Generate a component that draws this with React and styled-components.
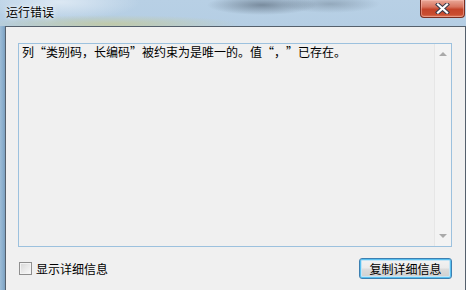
import React from "react";
import styled, { createGlobalStyle } from "styled-components";

const Global = createGlobalStyle`
  html, body { margin: 0; padding: 0; background: #fff; }
  body { width: 466px; height: 290px; overflow: hidden; }
`;

const cjk = `"Noto Sans CJK SC", "Noto Sans", sans-serif`;

const Window = styled.div`
  width: 466px;
  height: 290px;
  display: flex;
  flex-direction: column;
  overflow: hidden;
  background:
    radial-gradient(ellipse 55px 10px at 262px 5px, rgba(70,84,100,0.55), rgba(70,84,100,0) 100%),
    radial-gradient(ellipse 50px 9px at 330px 4px, rgba(80,96,112,0.35), rgba(80,96,112,0) 100%),
    radial-gradient(ellipse 130px 9px at 110px 24px, rgba(196,200,150,0.75), rgba(196,200,150,0) 100%),
    radial-gradient(ellipse 80px 18px at 60px 2px, rgba(226,236,246,0.85), rgba(226,236,246,0) 100%),
    linear-gradient(180deg, #b8d0e5 0%, #a3c3de 60%, #abc6dd 100%);
`;

const TitleBar = styled.div`
  height: 26px;
  flex: none;
  display: flex;
  align-items: flex-start;
  justify-content: space-between;
`;

const Title = styled.span`
  font-family: ${cjk};
  font-size: 12px;
  line-height: 14px;
  color: #000;
  margin: 5px 0 0 6px;
  text-shadow: 0 0 6px rgba(255,255,255,0.9), 0 0 3px rgba(255,255,255,0.9);
`;

const CloseButton = styled.div`
  width: 45px;
  height: 18px;
  margin-right: 1px;
  box-sizing: border-box;
  border: 1px solid #7a2f22;
  border-top: none;
  border-radius: 0 0 4px 4px;
  background: linear-gradient(180deg, #e9a898 0%, #d8745f 40%, #c4442a 55%, #c94d30 85%, #dc7a5c 100%);
  box-shadow: inset 0 0 0 1px rgba(255,200,190,0.45);
  display: flex;
  align-items: center;
  justify-content: center;
`;

const Frame = styled.div`
  flex: 1;
  display: flex;
  min-height: 0;
`;

const SideFrame = styled.div`
  width: 5px;
  flex: none;
  background: linear-gradient(90deg, #9dbcd6 0%, #8aaecd 60%, #7c9fbd 100%);
`;

const Client = styled.div`
  flex: 1;
  display: flex;
  flex-direction: column;
  background: #f0f0f0;
  border: 1px solid #55606c;
  border-bottom: none;
  padding: 16px 13px 0 12px;
`;

const TextBox = styled.div`
  height: 204px;
  box-sizing: border-box;
  border: 1px solid #9cc1de;
  background: #f0f0f0;
  display: flex;
`;

const Message = styled.div`
  flex: 1;
  font-family: ${cjk};
  font-size: 12px;
  line-height: 14px;
  color: #000;
  padding: 1px 0 0 3px;
  white-space: nowrap;
`;

const Quote = styled.span`
  display: inline-block;
  width: 12px;
  text-align: ${(p) => (p.$open ? "right" : "left")};
`;

const ScrollBar = styled.div`
  width: 16px;
  flex: none;
  background: #f3f3f3;
  border-left: 1px solid #e6e6e6;
  display: flex;
  flex-direction: column;
  justify-content: space-between;
  align-items: center;
  padding: 8px 0 8px;
`;

const Arrow = styled.div`
  width: 0;
  height: 0;
  border-left: 4px solid transparent;
  border-right: 4px solid transparent;
  ${(p) =>
    p.$down
      ? "border-top: 4px solid #a9a9a9;"
      : "border-bottom: 4px solid #a9a9a9;"}
`;

const Footer = styled.div`
  margin-top: 11px;
  height: 21px;
  display: flex;
  align-items: center;
  justify-content: space-between;
`;

const CheckLabel = styled.label`
  display: flex;
  align-items: center;
  gap: 4px;
  margin-left: 1px;
  font-family: ${cjk};
  font-size: 12px;
  color: #000;
`;

const CheckBox = styled.span`
  width: 13px;
  height: 13px;
  box-sizing: border-box;
  border: 1px solid #8f8f8f;
  background: linear-gradient(135deg, #d6d6d6 0%, #e8e8e8 45%, #fbfbfb 100%);
  box-shadow: inset 0 0 0 1px #f4f4f4;
`;

const Button = styled.button`
  width: 93px;
  height: 21px;
  box-sizing: border-box;
  border: 1px solid #3c7fb1;
  border-radius: 3px;
  padding: 0;
  background: linear-gradient(180deg, #f3f3f3 0%, #ebebeb 48%, #dcdcdc 52%, #cfcfcf 100%);
  box-shadow: inset 0 0 0 1px #58c0f0, inset 0 0 0 2px #c4e5f6;
  font-family: ${cjk};
  font-size: 12px;
  color: #000;
  line-height: 14px;
`;

export default function App() {
  return (
    <>
      <Global />
      <Window>
        <TitleBar>
          <Title>运行错误</Title>
          <CloseButton>
            <svg width="15" height="11" viewBox="0 0 15 11">
              <path d="M3 1.5 L12 9.5 M12 1.5 L3 9.5" stroke="#3a3a4a" strokeWidth="4.2" strokeLinecap="square" />
              <path d="M3 1.5 L12 9.5 M12 1.5 L3 9.5" stroke="#ffffff" strokeWidth="2.2" strokeLinecap="square" />
            </svg>
          </CloseButton>
        </TitleBar>
        <Frame>
          <SideFrame />
          <Client>
            <TextBox>
              <Message>
                列<Quote $open>“</Quote>类别码，长编码<Quote>”</Quote>被约束为是唯一的。值
                <Quote $open>“</Quote>，<Quote>”</Quote>已存在。
              </Message>
              <ScrollBar>
                <Arrow />
                <Arrow $down />
              </ScrollBar>
            </TextBox>
            <Footer>
              <CheckLabel>
                <CheckBox />
                显示详细信息
              </CheckLabel>
              <Button>复制详细信息</Button>
            </Footer>
          </Client>
        </Frame>
      </Window>
    </>
  );
}
